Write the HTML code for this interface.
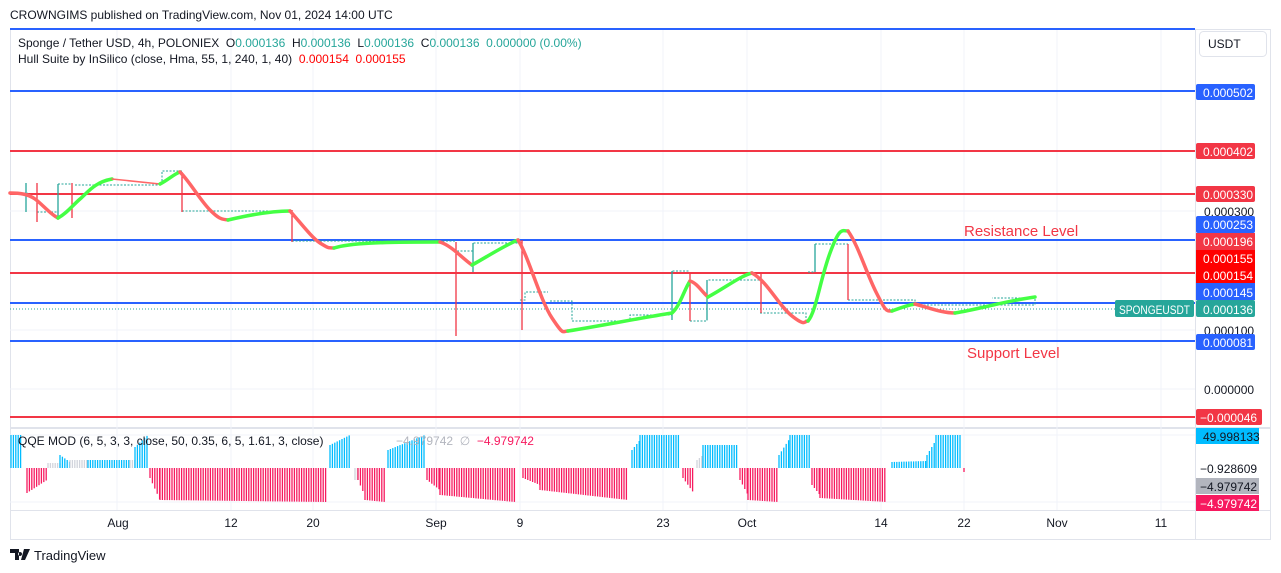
<!DOCTYPE html>
<html><head><meta charset="utf-8"><style>
body{margin:0;width:1281px;height:573px;background:#fff;overflow:hidden;font-family:"Liberation Sans",sans-serif;}
svg{position:absolute;left:0;top:0}
text{white-space:pre}
</style></head><body>
<svg width="1281" height="573" viewBox="0 0 1281 573" font-family="Liberation Sans, sans-serif">
<text x="10" y="19" font-size="12" fill="#131722">CROWNGIMS published on TradingView.com, Nov 01, 2024 14:00 UTC</text>
<rect x="10.5" y="29.5" width="1260" height="510" fill="none" stroke="#e0e3eb"/>
<line x1="10" y1="29" x2="1195" y2="29" stroke="#2962ff" stroke-width="2"/>
<line x1="1195.5" y1="30" x2="1195.5" y2="540" stroke="#e0e3eb"/>
<line x1="10" y1="428" x2="1270" y2="428" stroke="#e0e3eb" stroke-width="2"/>
<line x1="10" y1="510.5" x2="1270" y2="510.5" stroke="#e0e3eb"/>
<g stroke="#f0f3fa">
<line x1="117" y1="30" x2="117" y2="510"/><line x1="231" y1="30" x2="231" y2="510"/><line x1="313" y1="30" x2="313" y2="510"/><line x1="436" y1="30" x2="436" y2="510"/><line x1="520" y1="30" x2="520" y2="510"/><line x1="663" y1="30" x2="663" y2="510"/><line x1="747" y1="30" x2="747" y2="510"/><line x1="881" y1="30" x2="881" y2="510"/><line x1="964" y1="30" x2="964" y2="510"/><line x1="1057" y1="30" x2="1057" y2="510"/><line x1="1161" y1="30" x2="1161" y2="510"/>
<line x1="10" y1="211" x2="1195" y2="211"/><line x1="10" y1="330" x2="1195" y2="330"/><line x1="10" y1="389" x2="1195" y2="389"/><line x1="10" y1="435" x2="1195" y2="435"/><line x1="10" y1="502" x2="1195" y2="502"/>
</g>
<g stroke-width="2">
<line x1="10" y1="91" x2="1195" y2="91" stroke="#2962ff"/>
<line x1="10" y1="151" x2="1195" y2="151" stroke="#f23645"/>
<line x1="10" y1="194" x2="1195" y2="194" stroke="#f23645"/>
<line x1="10" y1="240" x2="1195" y2="240" stroke="#2962ff"/>
<line x1="10" y1="273" x2="1195" y2="273" stroke="#f23645"/>
<line x1="10" y1="303" x2="1195" y2="303" stroke="#2962ff"/>
<line x1="10" y1="341" x2="1195" y2="341" stroke="#2962ff"/>
<line x1="10" y1="417" x2="1195" y2="417" stroke="#f23645"/>
</g>
<line x1="10" y1="309" x2="1195" y2="309" stroke="#26a69a" stroke-dasharray="1 2"/>
<text x="964" y="236" font-size="15" fill="#f23645">Resistance Level</text>
<text x="967" y="358" font-size="15" fill="#f23645">Support Level</text>
<g fill="none" stroke="#26a69a" stroke-width="1" stroke-dasharray="2 1.5">
<path d="M10 193H28M37 212H58V184H72M75 185H162V171H182M182 211H292M292 241H456M457 251H473V243H520M520 300H525V292H548M550 301H572V321H630V315H672V271H690M690 321H707V280H760M760 313H806V321H808M808 272H815V244H848M848 300H915V305H1035V298H992"/>
</g>
<g stroke="#f23645" stroke-width="1.3">
<line x1="37" y1="183" x2="37" y2="222"/><line x1="72" y1="183" x2="72" y2="218"/><line x1="182" y1="172" x2="182" y2="212"/><line x1="292" y1="210" x2="292" y2="242"/><line x1="456" y1="242" x2="456" y2="336"/><line x1="522" y1="240" x2="522" y2="330"/><line x1="690" y1="273" x2="690" y2="321"/><line x1="761" y1="273" x2="761" y2="313"/><line x1="848" y1="244" x2="848" y2="300"/>
</g>
<g stroke="#26a69a" stroke-width="1.3">
<line x1="26" y1="183" x2="26" y2="212"/><line x1="58" y1="184" x2="58" y2="218"/><line x1="473" y1="243" x2="473" y2="272"/><line x1="672" y1="271" x2="672" y2="320"/><line x1="707" y1="280" x2="707" y2="320"/><line x1="815" y1="244" x2="815" y2="272"/>
</g>
<g fill="none" stroke-width="3.5" stroke-linecap="round" stroke-linejoin="round">
<path stroke="#f66" d="M10 193C20 193 28 194 35 199S50 214 58 218"/>
<path stroke="#4f4" d="M58 218C66 214 72 206 80 199S95 182 112 179"/>
<path stroke="#f66" stroke-width="1.5" d="M112 179L160 184"/>
<path stroke="#4f4" d="M160 184C168 180 174 174 180 172"/>
<path stroke="#f66" d="M180 172C190 182 200 200 210 210S222 219 228 220"/>
<path stroke="#4f4" d="M228 220C245 216 270 211 290 211"/>
<path stroke="#f66" d="M290 211C300 222 312 238 320 243S328 248 334 248"/>
<path stroke="#4f4" d="M334 248C350 243 380 242 440 242"/>
<path stroke="#f66" d="M440 242C452 246 462 258 472 265"/>
<path stroke="#4f4" d="M472 265C485 258 505 245 518 240"/>
<path stroke="#f66" d="M518 240C528 255 540 300 552 318S562 331 568 331"/>
<path stroke="#4f4" d="M568 331C600 326 640 318 672 313C680 306 684 290 690 281"/>
<path stroke="#f66" d="M690 281C697 283 702 292 708 297"/>
<path stroke="#4f4" d="M708 297C725 288 740 276 752 273"/>
<path stroke="#f66" d="M752 273C768 282 778 305 792 316S804 321 808 321"/>
<path stroke="#4f4" d="M808 321C816 312 820 280 830 253S842 231 848 231"/>
<path stroke="#f66" d="M848 231C858 245 866 272 876 292S886 311 892 311"/>
<path stroke="#4f4" d="M892 311C900 308 908 305 915 304"/>
<path stroke="#f66" d="M915 304C930 308 942 313 955 313"/>
<path stroke="#4f4" d="M955 313C980 309 1005 301 1035 297"/>
</g>
<g font-size="12">
<text x="18" y="47" fill="#131722">Sponge / Tether USD, 4h, POLONIEX  O<tspan fill="#26a69a">0.000136</tspan>  H<tspan fill="#26a69a">0.000136</tspan>  L<tspan fill="#26a69a">0.000136</tspan>  C<tspan fill="#26a69a">0.000136  0.000000 (0.00%)</tspan></text>
<text x="18" y="63" fill="#131722">Hull Suite by InSilico (close, Hma, 55, 1, 240, 1, 40)  <tspan fill="#f00">0.000154  0.000155</tspan></text>
</g>
<g id="bars"></g>
<text x="18" y="445" font-size="12" fill="#131722">QQE MOD (6, 5, 3, 3, close, 50, 0.35, 6, 5, 1.61, 3, close)</text>
<text x="396" y="445" font-size="12" fill="#b2b5be">−4.979742  ∅  <tspan fill="#f7195f">−4.979742</tspan></text>
<rect x="1199.5" y="31.5" width="67" height="25" rx="4" fill="#fff" stroke="#e0e3eb"/>
<text x="1208" y="48" font-size="12" fill="#131722">USDT</text>
<g font-size="12" fill="#fff">
<rect x="1196" y="84" width="59" height="16" rx="2" fill="#2962ff"/><text x="1203" y="97">0.000502</text>
<rect x="1196" y="143" width="59" height="16" rx="2" fill="#f23645"/><text x="1203" y="156">0.000402</text>
<rect x="1196" y="186" width="59" height="16" rx="2" fill="#f23645"/><text x="1203" y="199">0.000330</text>
<text x="1204" y="216" fill="#131722">0.000300</text>
<rect x="1196" y="216" width="59" height="17" rx="2" fill="#2962ff"/><text x="1203" y="229">0.000253</text>
<rect x="1196" y="233" width="59" height="17" fill="#f23645"/><text x="1203" y="246">0.000196</text>
<rect x="1196" y="250" width="59" height="33" fill="#f00"/><text x="1203" y="263">0.000155</text><text x="1203" y="280">0.000154</text>
<rect x="1196" y="283" width="59" height="17" fill="#2962ff"/><text x="1203" y="297">0.000145</text>
<rect x="1196" y="300" width="59" height="17" rx="2" fill="#26a69a"/><text x="1203" y="314">0.000136</text>
<rect x="1115" y="300" width="79" height="17" rx="2" fill="#26a69a"/><text x="1119" y="314" textLength="71" lengthAdjust="spacingAndGlyphs">SPONGEUSDT</text>
<text x="1204" y="335" fill="#131722">0.000100</text>
<rect x="1196" y="334" width="59" height="16" rx="2" fill="#2962ff"/><text x="1203" y="347">0.000081</text>
<text x="1204" y="394" fill="#131722">0.000000</text>
<rect x="1196" y="409" width="66" height="16" rx="2" fill="#f23645"/><text x="1200" y="422">−0.000046</text>
<rect x="1196" y="428" width="63" height="16" fill="#00bcff"/><text x="1203" y="441" fill="#131722">49.998133</text>
<text x="1200" y="473" fill="#131722">−0.928609</text>
<rect x="1196" y="478" width="63" height="16" fill="#b2b5be"/><text x="1200" y="491" fill="#131722">−4.979742</text>
<rect x="1196" y="495" width="63" height="16" fill="#f7195f"/><text x="1200" y="508">−4.979742</text>
</g>
<g font-size="12" fill="#131722" text-anchor="middle">
<text x="118" y="527">Aug</text><text x="231" y="527">12</text><text x="313" y="527">20</text><text x="436" y="527">Sep</text><text x="520" y="527">9</text><text x="663" y="527">23</text><text x="747" y="527">Oct</text><text x="881" y="527">14</text><text x="964" y="527">22</text><text x="1057" y="527">Nov</text><text x="1161" y="527">11</text>
</g>
<path d="M10 549h9v11h-4v-7h-5z M20 552a2 2 0 1 0 0.1 0z M24 549h6l-5 11h-4z" fill="#131722"/>
<text x="34" y="560" font-size="13" fill="#131722">TradingView</text>
</svg>
<script>
var segs=[[11,22,'c',435,435],[27,47,'p',493,480],[48,60,'g',463,463],[60,70,'c',455,462],[70,88,'g',460,460],[88,130,'c',460,460],[130,135,'g',460,460],[135,148,'c',447,435],[150,160,'p',478,500],[160,327,'p',500,502],[328,330,'g',468,468],[330,350,'c',445,435],[355,358,'g',480,480],[358,365,'p',480,496],[365,385,'p',500,502],[388,425,'c',450,435],[427,440,'p',480,490],[440,515,'p',495,502],[523,540,'p',478,485],[540,628,'p',490,500],[632,640,'c',450,440],[640,680,'c',435,435],[683,693,'p',478,492],[697,703,'g',460,455],[703,738,'c',445,445],[740,748,'p',480,495],[748,778,'p',500,502],[779,790,'c',455,438],[790,810,'c',435,435],[812,820,'p',485,495],[820,887,'p',498,502],[892,926,'c',462,461],[927,936,'c',455,440],[936,962,'c',435,435],[964,966,'p',472,472]];
var g=document.getElementById('bars'),col={c:'#00bcff',p:'#f7195f',g:'#d1d4dc'},s='';
segs.forEach(function(a){for(var x=a[0];x<=a[1];x+=2.4){var t=(x-a[0])/Math.max(1,a[1]-a[0]);var y=a[3]+(a[4]-a[3])*t;s+='<line x1="'+x.toFixed(1)+'" x2="'+x.toFixed(1)+'" y1="468" y2="'+y.toFixed(1)+'" stroke="'+col[a[2]]+'" stroke-width="1.3"/>';}});
g.innerHTML=s;
</script>
</body></html>
